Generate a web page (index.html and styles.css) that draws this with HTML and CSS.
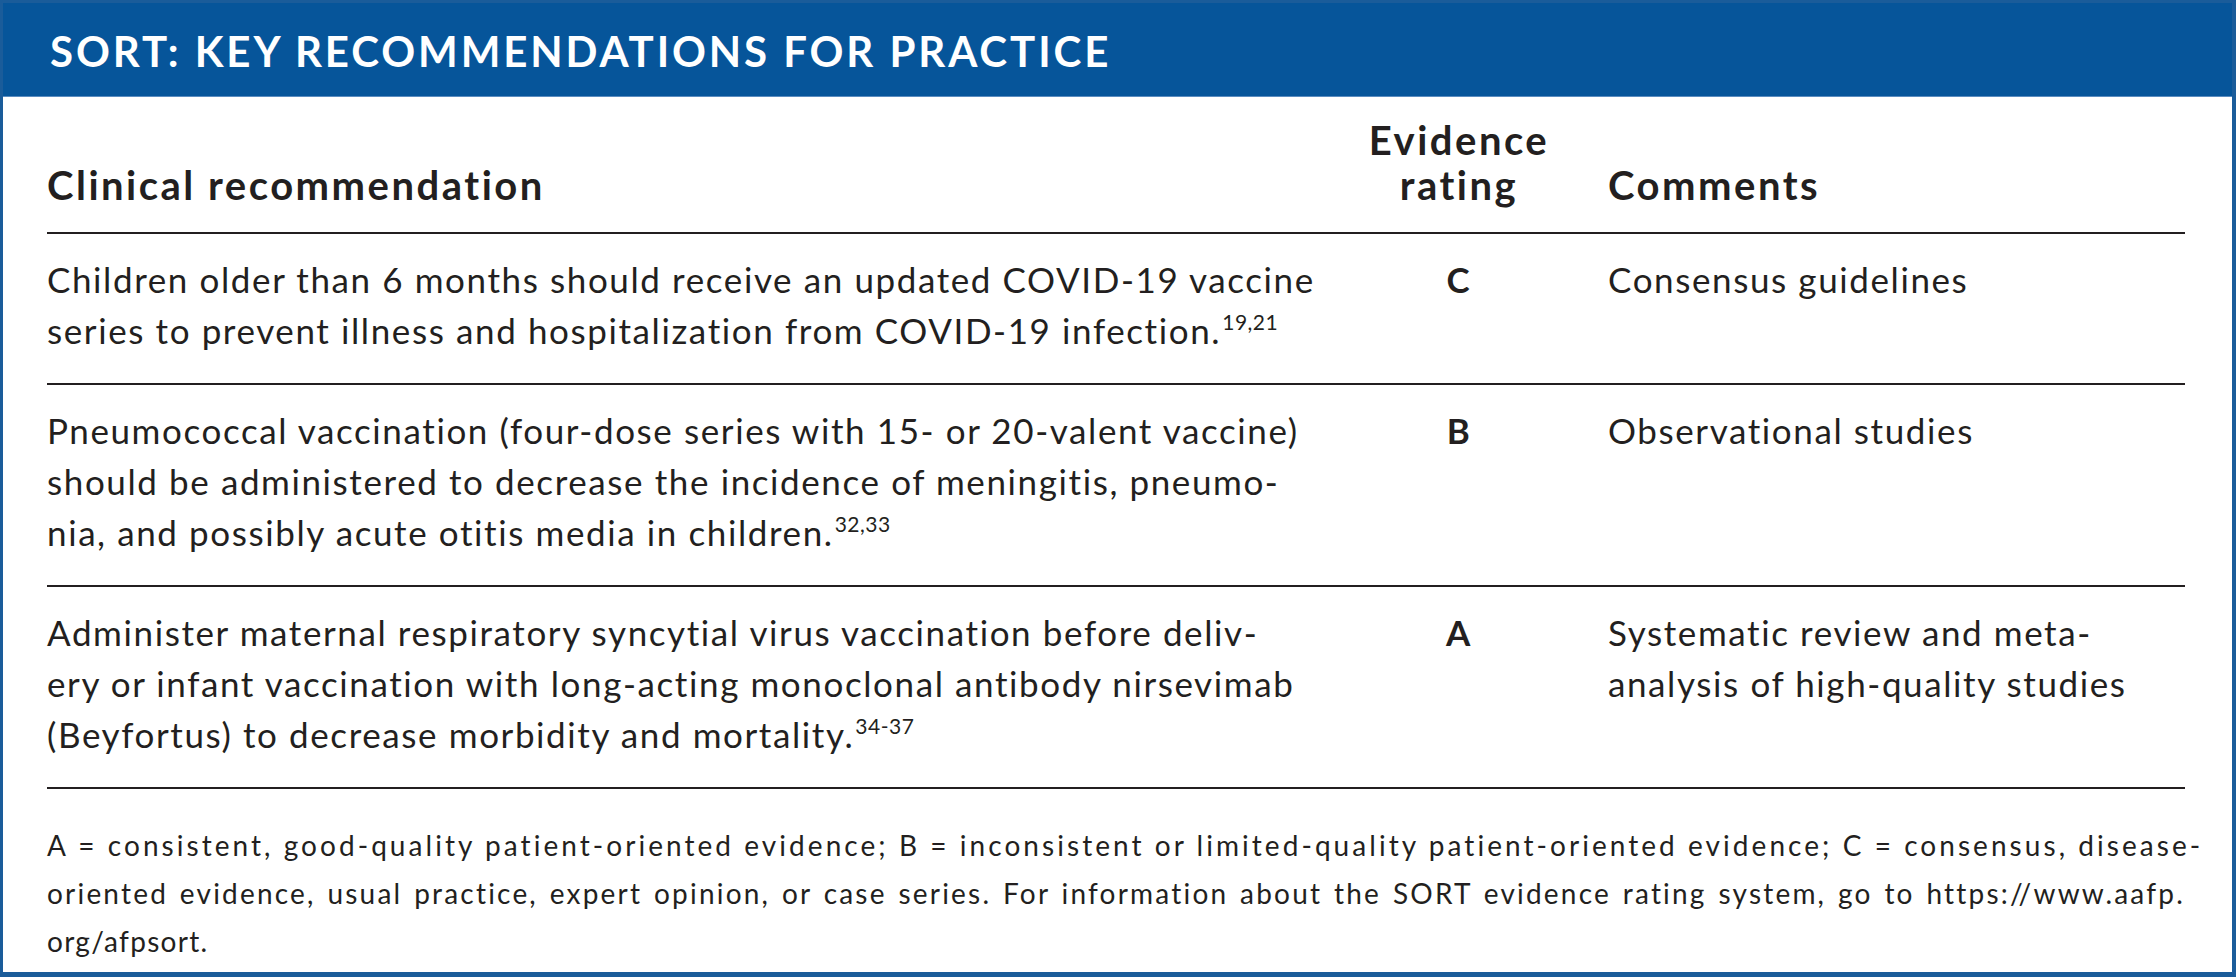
FILE: index.html
```html
<!DOCTYPE html>
<html lang="en">
<head>
<meta charset="utf-8">
<title>SORT: Key Recommendations for Practice</title>
<link rel="stylesheet" href="styles.css">
</head>
<body>
<div class="card">
  <div class="band"><h1 class="title">SORT: KEY RECOMMENDATIONS FOR PRACTICE</h1></div>
  <div class="content">
    <div class="row head">
      <div class="c1">Clinical recommendation</div>
      <div class="c2">Evidence<br>rating</div>
      <div class="c3">Comments</div>
    </div>
    <div class="row">
      <div class="c1">Children older than 6 months should receive an updated COVID-19 vaccine<br>series to prevent illness and hospitalization from COVID-19 infection.<sup>19,21</sup></div>
      <div class="c2 grade">C</div>
      <div class="c3">Consensus guidelines</div>
    </div>
    <div class="row">
      <div class="c1">Pneumococcal vaccination (four-dose series with 15- or 20-valent vaccine)<br>should be administered to decrease the incidence of meningitis, pneumo-<br>nia, and possibly acute otitis media in children.<sup>32,33</sup></div>
      <div class="c2 grade">B</div>
      <div class="c3">Observational studies</div>
    </div>
    <div class="row">
      <div class="c1">Administer maternal respiratory syncytial virus vaccination before deliv-<br>ery or infant vaccination with long-acting monoclonal antibody nirsevimab<br>(Beyfortus) to decrease morbidity and mortality.<sup>34-37</sup></div>
      <div class="c2 grade">A</div>
      <div class="c3">Systematic review and meta-<br>analysis of high-quality studies</div>
    </div>
    <div class="foot">
      <span class="jl l1">A = consistent, good-quality patient-oriented evidence; B = inconsistent or limited-quality patient-oriented evidence; C = consensus, disease-</span>
      <span class="jl l2">oriented evidence, usual practice, expert opinion, or case series. For information about the SORT evidence rating system, go to https://www.aafp.</span>
      <span class="ll">org/afpsort.</span>
    </div>
  </div>
</div>
</body>
</html>
```
FILE: styles.css
```css
html, body {
  margin: 0;
  padding: 0;
  background: #ffffff;
}

.card {
  width: 2236px;
  height: 977px;
  box-sizing: border-box;
  border: 3px solid #1a5c9a;
  border-bottom-width: 5px;
  border-right-width: 4px;
  display: flex;
  flex-direction: column;
  font-family: Lato, "Liberation Sans", sans-serif;
  color: #231f20;
}

.band {
  height: 94px;
  box-sizing: border-box;
  background: #06559a;
  border-bottom: 1px solid #5a8cc0;
  display: flex;
  align-items: center;
  padding: 2px 0 0 47px;
}

.title {
  margin: 0;
  font-size: 42px;
  font-weight: 700;
  color: #ffffff;
  letter-spacing: 2.9px;
  white-space: nowrap;
}

.content {
  padding: 0 47px 0 44px;
}

.row {
  display: grid;
  grid-template-columns: 1263px 298px 1fr;
  border-bottom: 2px solid #231f20;
  padding: 20px 0 27px;
  font-size: 35px;
  line-height: 51px;
  letter-spacing: 1.6px;
  white-space: nowrap;
}

.row.head {
  padding: 21px 0 24px;
  font-size: 40px;
  line-height: 45px;
  font-weight: 700;
  letter-spacing: 2.5px;
  align-items: end;
}

.c2 {
  text-align: center;
}

.grade {
  font-weight: 700;
}

sup {
  font-size: 21px;
  line-height: 0;
  letter-spacing: 0.5px;
  vertical-align: 0;
  position: relative;
  top: -14px;
  margin-left: 1px;
}

.foot {
  padding-top: 32px;
  font-size: 28px;
  line-height: 48px;
  letter-spacing: 1.3px;
}

.jl {
  display: block;
  text-align: justify;
  text-align-last: justify;
  white-space: nowrap;
}

.l1 {
  letter-spacing: 3.05px;
}

.l2 {
  letter-spacing: 2.2px;
}

.ll {
  display: block;
}
```
